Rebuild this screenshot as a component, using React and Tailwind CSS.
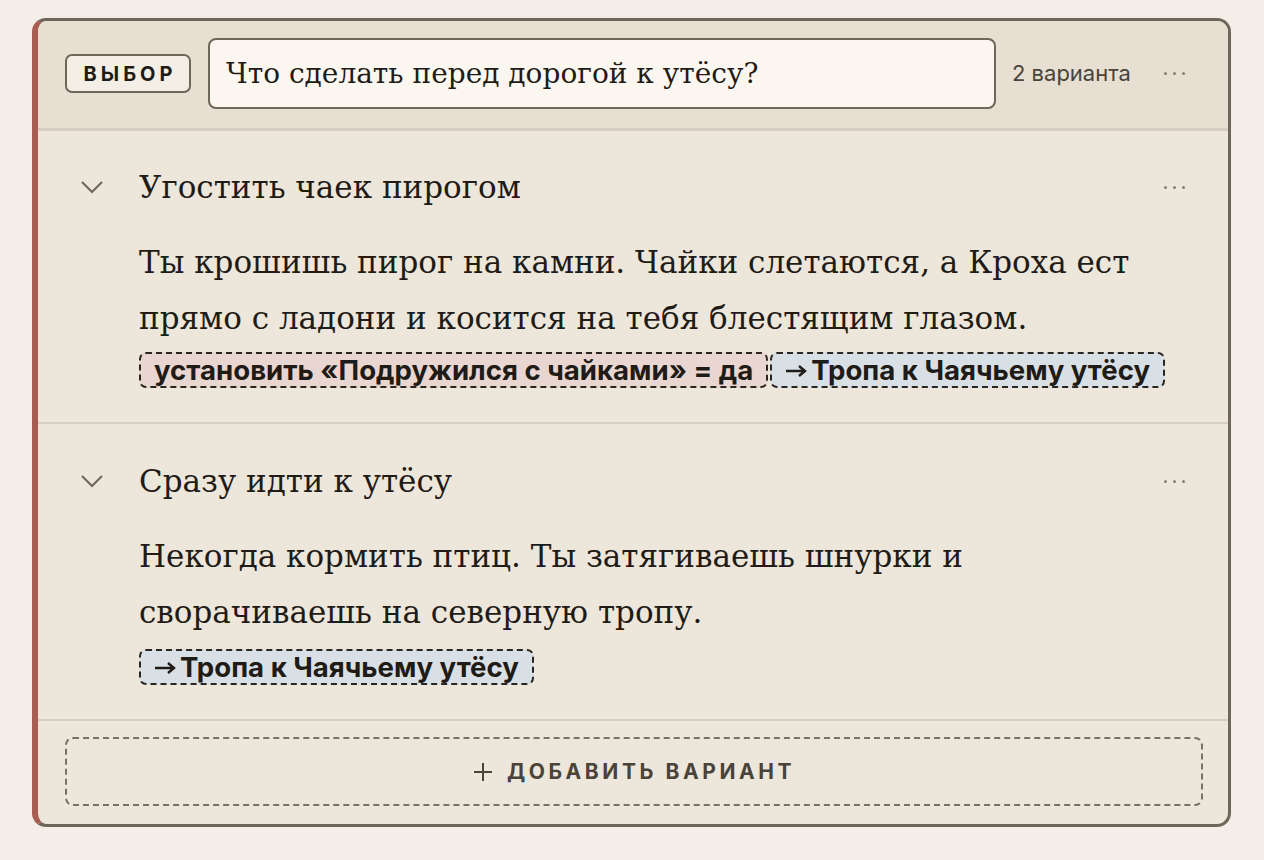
import React from "react";

const serif = { fontFamily: '"DejaVu Serif", "Liberation Serif", serif' };

const Dots = () => (
  <div className="flex items-center gap-[6px] pr-[2px]">
    <span className="w-[3px] h-[3px] rounded-full bg-[#8a8176]"></span>
    <span className="w-[3px] h-[3px] rounded-full bg-[#8a8176]"></span>
    <span className="w-[3px] h-[3px] rounded-full bg-[#8a8176]"></span>
  </div>
);

const Chevron = () => (
  <svg width="24" height="14" viewBox="0 0 24 14" fill="none">
    <polyline points="2,2 12,12 22,2" stroke="#6f665a" strokeWidth="2" />
  </svg>
);

const options = [
  {
    title: "Угостить чаек пирогом",
    text: [
      "Ты крошишь пирог на камни. Чайки слетаются, а Кроха ест",
      "прямо с ладони и косится на тебя блестящим глазом.",
    ],
    tags: [
      { label: "установить «Подружился с чайками» = да", kind: "set" },
      { label: "Тропа к Чаячьему утёсу", kind: "go" },
    ],
  },
  {
    title: "Сразу идти к утёсу",
    text: [
      "Некогда кормить птиц. Ты затягиваешь шнурки и",
      "сворачиваешь на северную тропу.",
    ],
    tags: [{ label: "Тропа к Чаячьему утёсу", kind: "go" }],
  },
];

const Option = ({ option, last }) => (
  <div
    className={`pl-[42px] pr-[41px] pb-[34px] border-b-2 border-[#d6cec1] ${
      last ? "pt-[37px]" : "pt-[36px]"
    }`}
  >
    <div className="flex items-center h-[40px]">
      <div className="w-[59px] flex items-center">
        <Chevron />
      </div>
      <div className="flex-1 text-[31px] text-[#1f1b16]" style={serif}>
        {option.title}
      </div>
      <Dots />
    </div>
    <div className="pl-[59px] mt-[27px]">
      <div className="text-[31px] leading-[56px] text-[#1f1b16]" style={serif}>
        {option.text.map((t) => (
          <div key={t}>{t}</div>
        ))}
      </div>
      <div className={`flex flex-wrap gap-[2px] ${last ? "mt-[9px]" : "mt-[6px]"}`}>
        {option.tags.map((tag) => (
          <span
            key={tag.label}
            className={`flex items-center font-[Inter] font-bold text-[27.6px] leading-[32px] px-[13px] border-2 border-dashed border-[#2a251f] rounded-[7px] text-[#1f1b16] ${
              tag.kind === "set" ? "bg-[#ead6d0]" : "bg-[#d9e0e5]"
            }`}
          >
            {tag.kind === "go" && (
              <svg width="22" height="14" viewBox="0 0 22 14" fill="none" className="mr-[4px] mt-[1px]">
                <path d="M1 7h19M14 2l6 5-6 5" stroke="#1f1b16" strokeWidth="2.4" />
              </svg>
            )}
            {tag.label}
          </span>
        ))}
      </div>
    </div>
  </div>
);

export default function App() {
  return (
    <div className="min-h-screen bg-[#f3efe8] pt-[18px] pl-[32px] pr-[33px] font-[Inter]">
      <div className="rounded-[14px] border-[3px] border-l-[6px] border-[#6f665a] border-l-[#a85c52] bg-[#ede6da] overflow-hidden">
        <div className="bg-[#e6dfd2] border-b-[3px] border-[#d6cec1] flex items-center pl-[27px] pr-[41px] pt-[17px] pb-[19px]">
          <div className="w-[126px] h-[39px] pl-[4px] flex items-center justify-center border-2 border-[#6f665a] rounded-[7px] bg-[#f4efe6] text-[20px] font-bold tracking-[0.2em] text-[#1f1b16]">
            ВЫБОР
          </div>
          <div
            className="ml-[17px] w-[788px] h-[71px] flex items-center px-[16px] border-2 border-[#6f665a] rounded-[8px] bg-[#fbf7f0] text-[28px] text-[#1f1b16]"
            style={serif}
          >
            Что сделать перед дорогой к утёсу?
          </div>
          <div className="ml-[16px] text-[22px] text-[#4a4339]">2 варианта</div>
          <div className="flex-1"></div>
          <Dots />
        </div>
        {options.map((o, i) => (
          <Option key={o.title} option={o} last={i === options.length - 1} />
        ))}
        <div className="pl-[27px] pr-[25px] pt-[16px] pb-[18px]">
          <div className="h-[69px] flex items-center justify-center gap-[14px] border-2 border-dashed border-[#7a7166] rounded-[8px] text-[21px] font-bold tracking-[0.17em] text-[#4a4339]">
            <svg width="20" height="20" viewBox="0 0 20 20" fill="none">
              <path d="M10 1v18M1 10h18" stroke="#4a4339" strokeWidth="2" />
            </svg>
            <span>ДОБАВИТЬ ВАРИАНТ</span>
          </div>
        </div>
      </div>
    </div>
  );
}
